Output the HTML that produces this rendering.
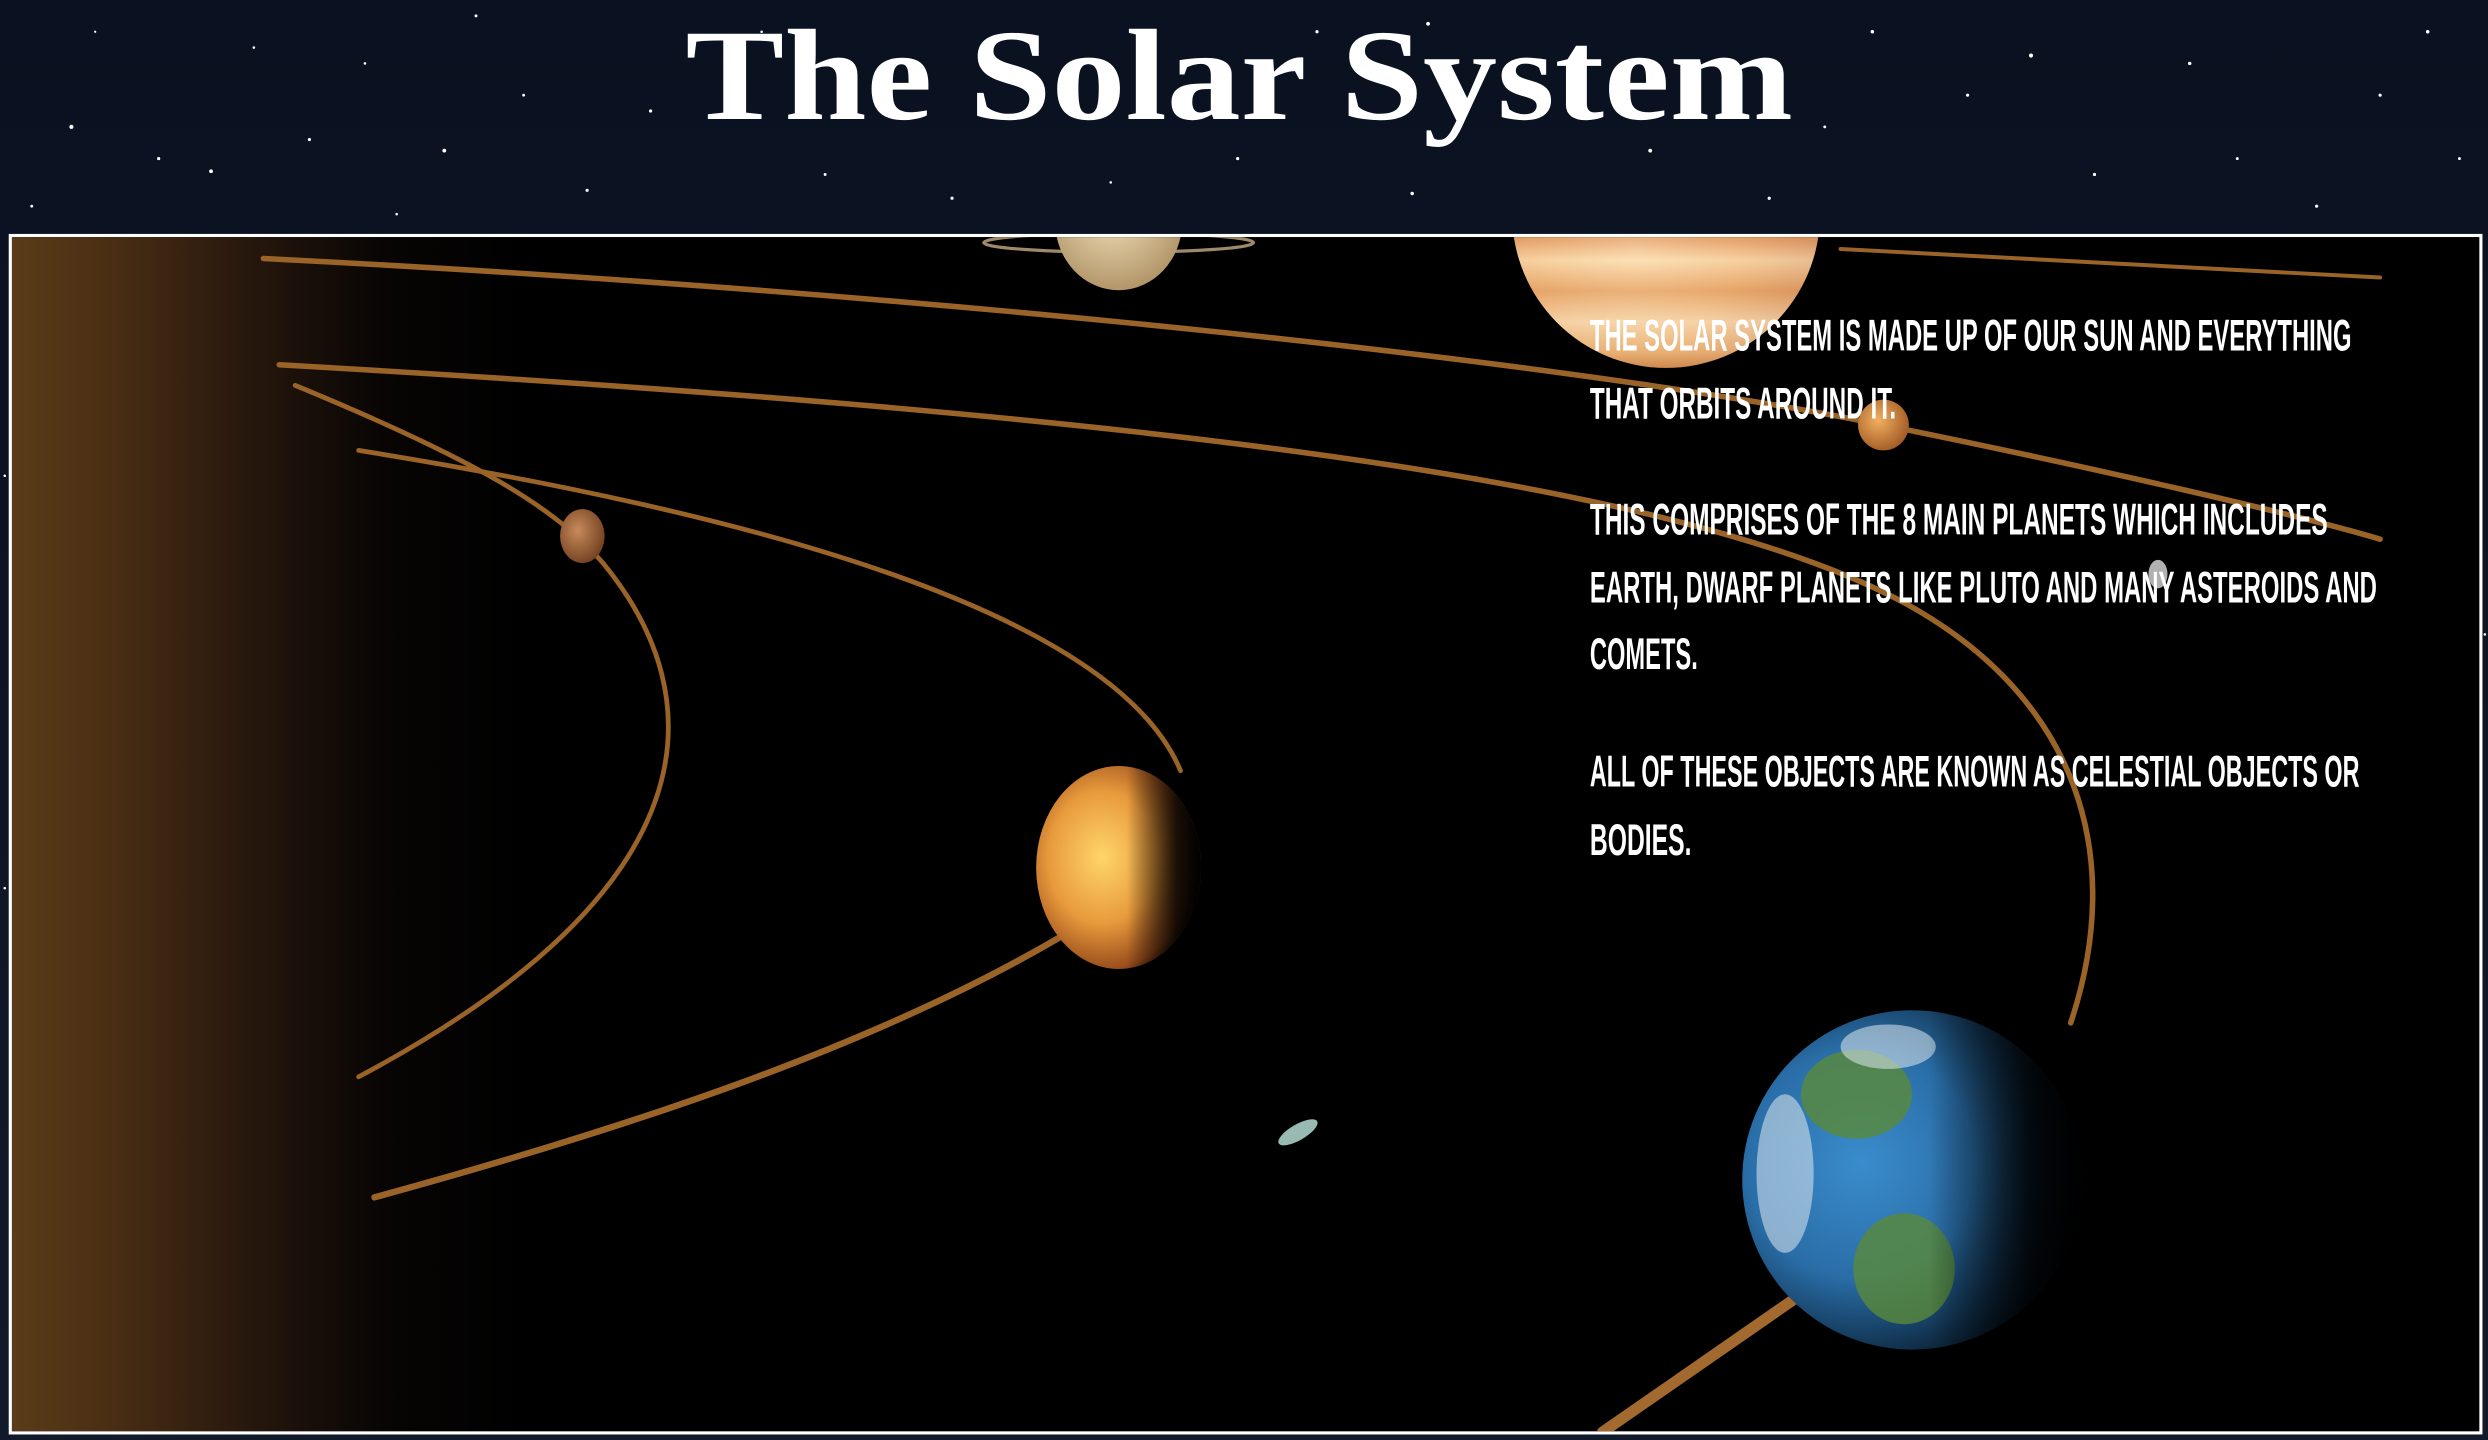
<!DOCTYPE html>
<html><head><meta charset="utf-8"><style>
html,body{margin:0;padding:0;background:#5a6060;width:2488px;height:1440px;overflow:hidden}
svg{display:block}
</style></head><body>
<svg width="2488" height="1440" viewBox="0 0 1568 908" preserveAspectRatio="none" xmlns="http://www.w3.org/2000/svg">
<defs>
<linearGradient id="sky" x1="0" y1="0" x2="0" y2="1"><stop offset="0" stop-color="#0a1120"/><stop offset="1" stop-color="#111a2b"/></linearGradient>
<linearGradient id="sun" x1="0" y1="0" x2="1" y2="0"><stop offset="0" stop-color="#5a3c18"/><stop offset="0.04" stop-color="#4a2e14"/><stop offset="0.1" stop-color="#24160c"/><stop offset="0.15" stop-color="#080504"/><stop offset="0.21" stop-color="#000"/></linearGradient>
<radialGradient id="jup" cx="0.4" cy="0.6" r="0.7"><stop offset="0" stop-color="#fbe3b6"/><stop offset="0.5" stop-color="#e7a764"/><stop offset="1" stop-color="#a5512a"/></radialGradient>
<linearGradient id="jupb" x1="0" y1="0" x2="0" y2="1"><stop offset="0.4" stop-color="#b8552a"/><stop offset="0.55" stop-color="#d9804a"/><stop offset="0.65" stop-color="#fde2b8"/><stop offset="0.75" stop-color="#e6a46a"/><stop offset="0.85" stop-color="#fbe3c0"/><stop offset="0.95" stop-color="#e9b47c"/><stop offset="1" stop-color="#c9824a"/></linearGradient>
<radialGradient id="sat" cx="0.45" cy="0.4" r="0.7"><stop offset="0" stop-color="#f4e2bd"/><stop offset="1" stop-color="#a88a5c"/></radialGradient>
<radialGradient id="ven" cx="0.4" cy="0.45" r="0.65"><stop offset="0" stop-color="#ffd56a"/><stop offset="0.5" stop-color="#e89a3c"/><stop offset="0.85" stop-color="#9a4e1c"/><stop offset="1" stop-color="#2a1205"/></radialGradient>
<radialGradient id="mer" cx="0.4" cy="0.4" r="0.7"><stop offset="0" stop-color="#c88a5a"/><stop offset="1" stop-color="#6a3a1c"/></radialGradient>
<radialGradient id="sm" cx="0.4" cy="0.4" r="0.7"><stop offset="0" stop-color="#f2b060"/><stop offset="1" stop-color="#9a5320"/></radialGradient>
<radialGradient id="earth" cx="0.35" cy="0.45" r="0.75"><stop offset="0" stop-color="#3a8ccc"/><stop offset="0.45" stop-color="#2a6ea8"/><stop offset="0.7" stop-color="#143a5a"/><stop offset="0.9" stop-color="#05101a"/><stop offset="1" stop-color="#000"/></radialGradient>
<linearGradient id="shade" x1="0" y1="0" x2="1" y2="0"><stop offset="0" stop-color="#000" stop-opacity="0"/><stop offset="0.55" stop-color="#000" stop-opacity="0"/><stop offset="0.85" stop-color="#000" stop-opacity="0.85"/><stop offset="1" stop-color="#000" stop-opacity="1"/></linearGradient>
<clipPath id="panel"><rect x="7.5" y="149.5" width="1555" height="753"/></clipPath>
</defs>
<rect width="1568" height="908" fill="url(#sky)"/>
<g fill="#fff">
<circle cx="45" cy="80" r="1.3"/><circle cx="100" cy="100" r="1"/><circle cx="133" cy="108" r="1.2"/><circle cx="195" cy="88" r="1"/><circle cx="230" cy="40" r="0.8"/><circle cx="280" cy="95" r="1.2"/><circle cx="330" cy="60" r="0.9"/><circle cx="370" cy="120" r="1"/><circle cx="160" cy="30" r="0.8"/><circle cx="60" cy="20" r="0.7"/><circle cx="300" cy="10" r="0.9"/><circle cx="410" cy="70" r="1"/><circle cx="520" cy="110" r="0.9"/><circle cx="600" cy="125" r="1"/><circle cx="700" cy="115" r="0.8"/><circle cx="780" cy="100" r="1"/><circle cx="890" cy="122" r="1.1"/><circle cx="830" cy="20" r="1"/><circle cx="900" cy="15" r="1.2"/><circle cx="1040" cy="95" r="1.2"/><circle cx="1115" cy="125" r="1"/><circle cx="1180" cy="20" r="1.1"/><circle cx="1240" cy="60" r="1"/><circle cx="1280" cy="35" r="1.3"/><circle cx="1320" cy="110" r="1"/><circle cx="1380" cy="40" r="1.1"/><circle cx="1410" cy="100" r="0.9"/><circle cx="1460" cy="130" r="1"/><circle cx="1500" cy="60" r="1"/><circle cx="1530" cy="20" r="1.1"/><circle cx="1550" cy="100" r="0.9"/><circle cx="1150" cy="80" r="0.9"/><circle cx="990" cy="60" r="0.8"/><circle cx="20" cy="130" r="0.9"/><circle cx="250" cy="135" r="0.8"/><circle cx="480" cy="20" r="0.8"/><circle cx="3" cy="300" r="0.8"/><circle cx="3" cy="560" r="0.8"/><circle cx="1566" cy="400" r="0.8"/>
</g>
<text x="432" y="75" font-family="Liberation Serif, serif" font-weight="bold" font-size="82" fill="#fff" textLength="698" lengthAdjust="spacingAndGlyphs">The Solar System</text>
<rect x="6.5" y="148.5" width="1557" height="755" fill="#000" stroke="#fff" stroke-width="2"/>
<g clip-path="url(#panel)">
<rect x="7.5" y="149.5" width="1555" height="753" fill="url(#sun)"/>
<g fill="none" stroke="#9a6428" stroke-linecap="round">
<path d="M166,163 C600,185 1000,230 1187,268 C1320,295 1450,325 1500,340" stroke-width="3.5"/>
<path d="M1160,157 L1500,175" stroke-width="2.5"/>
<path d="M176,230 C700,260 1050,300 1200,380 C1310,440 1340,540 1305,645" stroke-width="3.5"/>
<path d="M186,243 C300,290 350,320 380,355 C450,440 450,560 226,679" stroke-width="3"/>
<path d="M226,284 C450,320 700,380 744,486" stroke-width="3"/>
<path d="M668,591 C550,660 400,710 236,755" stroke-width="4"/>
<path d="M1010,903 L1180,785" stroke-width="7" stroke="#a36a30"/>
</g>
<ellipse cx="705" cy="153" rx="85" ry="6" fill="none" stroke="#9e8a6a" stroke-width="2"/>
<ellipse cx="705" cy="140" rx="40" ry="43" fill="url(#sat)"/>
<circle cx="1050" cy="135" r="97" fill="url(#jupb)"/>
<circle cx="1050" cy="135" r="97" fill="url(#jup)" opacity="0.3"/>
<circle cx="1187" cy="268" r="16" fill="url(#sm)"/>
<ellipse cx="367" cy="338" rx="14" ry="17" fill="url(#mer)"/>
<ellipse cx="705" cy="547" rx="52" ry="64" fill="url(#ven)"/>
<ellipse cx="705" cy="547" rx="52" ry="64" fill="url(#shade)"/>
<circle cx="1205" cy="744" r="107" fill="url(#earth)"/>
<g fill="#5a8a3a" opacity="0.8"><ellipse cx="1170" cy="690" rx="35" ry="28"/><ellipse cx="1200" cy="800" rx="32" ry="35"/></g>
<g fill="#dfe8ee" opacity="0.55"><ellipse cx="1125" cy="740" rx="18" ry="50"/><ellipse cx="1190" cy="660" rx="30" ry="14"/></g>
<circle cx="1205" cy="744" r="107" fill="url(#shade)"/>
<ellipse cx="818" cy="714" rx="14" ry="5" fill="#bfe8e0" transform="rotate(-30 818 714)" opacity="0.8"/>
<ellipse cx="1360" cy="362" rx="6" ry="9" fill="#ddd" opacity="0.8"/>
</g>
<g font-family="Liberation Sans Narrow, Liberation Sans, sans-serif" font-weight="bold" font-size="28" fill="#fff">
<text x="1002" y="221" textLength="480" lengthAdjust="spacingAndGlyphs">THE SOLAR SYSTEM IS MADE UP OF OUR SUN AND EVERYTHING</text>
<text x="1002" y="264" textLength="193" lengthAdjust="spacingAndGlyphs">THAT ORBITS AROUND IT.</text>
<text x="1002" y="337" textLength="465" lengthAdjust="spacingAndGlyphs">THIS COMPRISES OF THE 8 MAIN PLANETS WHICH INCLUDES</text>
<text x="1002" y="380" textLength="496" lengthAdjust="spacingAndGlyphs">EARTH, DWARF PLANETS LIKE PLUTO AND MANY ASTEROIDS AND</text>
<text x="1002" y="422" textLength="68" lengthAdjust="spacingAndGlyphs">COMETS.</text>
<text x="1002" y="496" textLength="485" lengthAdjust="spacingAndGlyphs">ALL OF THESE OBJECTS ARE KNOWN AS CELESTIAL OBJECTS OR</text>
<text x="1002" y="539" textLength="64" lengthAdjust="spacingAndGlyphs">BODIES.</text>
</g>
</svg>
</body></html>
